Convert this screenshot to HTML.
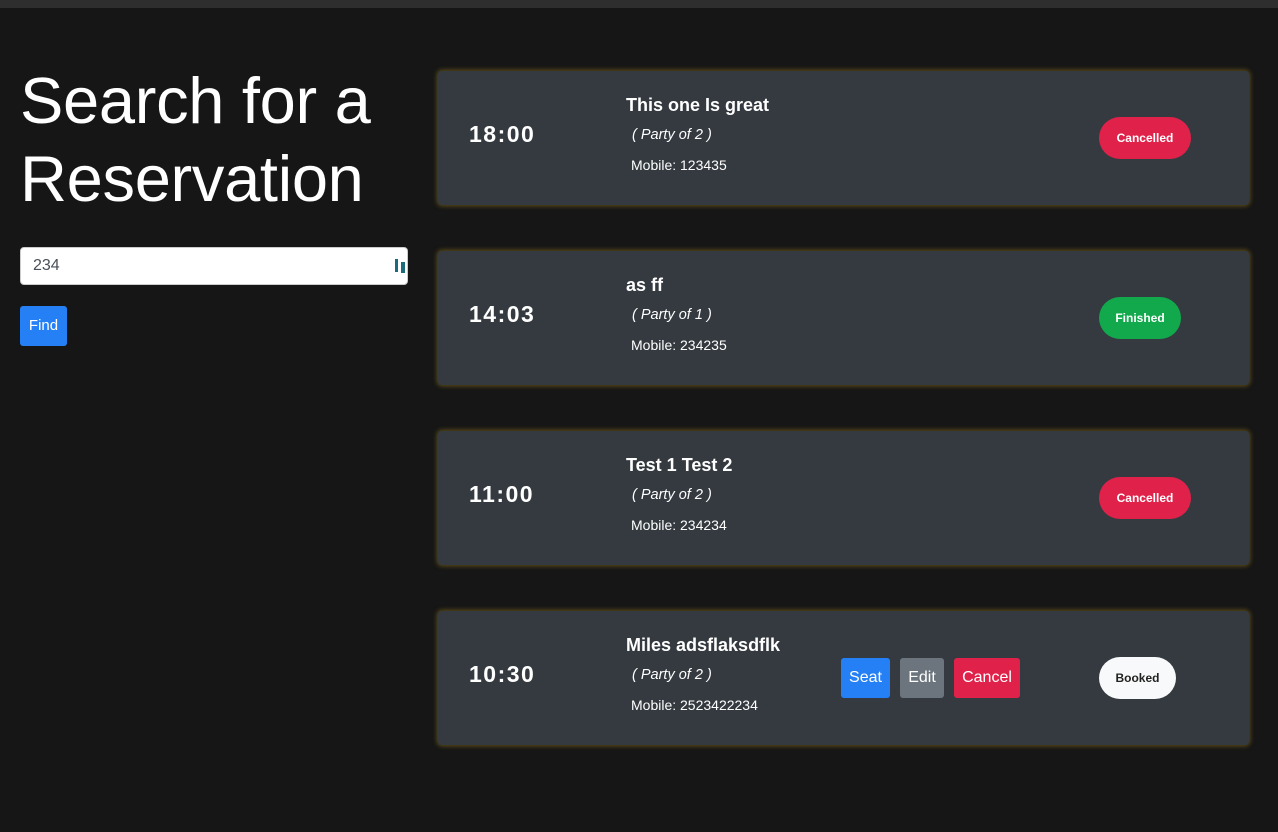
<!DOCTYPE html>
<html><head><style>
body{margin:0;width:1278px;height:832px;background:#161616;font-family:"Liberation Sans",sans-serif;overflow:hidden;position:relative;color:#fff}
.top{position:absolute;left:0;top:0;width:1278px;height:8px;background:#2e2e2e}
h1{position:absolute;left:20px;top:62px;margin:0;font-weight:400;font-size:65px;line-height:78px;letter-spacing:-0.3px}
.inp{position:absolute;left:20px;top:247px;width:388px;height:38px;background:#fff;border:1px solid #ccc;border-radius:4px;box-sizing:border-box;color:#495057;font-size:16px;line-height:36px;padding-left:12px}
.inp i{position:absolute;right:6px;top:11px;width:3px;height:13px;background:#1c6b7a;border-right:3px solid #fff;box-shadow:5px 2px 0 -1px #1c6b7a}
.find{position:absolute;left:20px;top:306px;width:47px;height:40px;background:#2680f5;border-radius:3px;font-size:15px;line-height:40px;text-align:center}
.card{position:absolute;left:438px;width:811px;height:134px;background:#343a40;border-radius:4px;box-shadow:0 0 5px 1px rgba(160,130,30,.55)}
.t{position:absolute;left:31px;top:50px;font-weight:700;font-size:23px;letter-spacing:1.5px}
.n{position:absolute;left:188px;top:24px;font-weight:700;font-size:18px}
.p{position:absolute;left:194px;top:56px;font-style:italic;font-size:14.5px}
.m{position:absolute;left:193px;top:86px;font-size:14px}
.b{position:absolute;top:46px;height:42px;border-radius:21px;font-weight:700;font-size:12px;line-height:42px;text-align:center}
.btn{position:absolute;top:47px;height:40px;border-radius:3px;font-size:16px;line-height:40px;text-align:center}
</style></head><body>
<div class="top"></div>
<h1>Search for a<br>Reservation</h1>
<div class="inp">234<i></i></div>
<div class="find">Find</div>

<div class="card" style="top:71px"><div class="t">18:00</div><div class="n">This one Is great</div><div class="p">( Party of 2 )</div><div class="m">Mobile: 123435</div><div class="b" style="left:661px;width:92px;background:#e0224a">Cancelled</div></div>
<div class="card" style="top:251px"><div class="t">14:03</div><div class="n">as ff</div><div class="p">( Party of 1 )</div><div class="m">Mobile: 234235</div><div class="b" style="left:661px;width:82px;background:#12a84c">Finished</div></div>
<div class="card" style="top:431px"><div class="t">11:00</div><div class="n">Test 1 Test 2</div><div class="p">( Party of 2 )</div><div class="m">Mobile: 234234</div><div class="b" style="left:661px;width:92px;background:#e0224a">Cancelled</div></div>
<div class="card" style="top:611px"><div class="t">10:30</div><div class="n">Miles adsflaksdflk</div><div class="p">( Party of 2 )</div><div class="m">Mobile: 2523422234</div>
<div class="btn" style="left:403px;width:49px;background:#2680f5">Seat</div>
<div class="btn" style="left:462px;width:44px;background:#6c757d">Edit</div>
<div class="btn" style="left:516px;width:66px;background:#e0224a">Cancel</div>
<div class="b" style="left:661px;width:77px;background:#f8f9fa;color:#222">Booked</div></div>
</body></html>
